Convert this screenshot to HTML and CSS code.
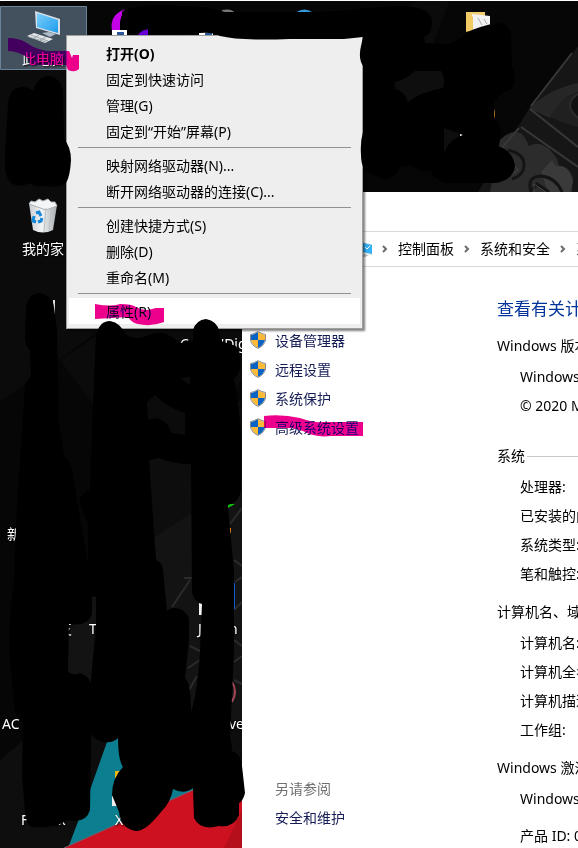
FILE: index.html
```html
<!DOCTYPE html>
<html lang="zh-CN">
<head>
<meta charset="utf-8">
<meta name="viewport" content="width=device-width, initial-scale=1">
<title>此电脑</title>
<link rel="stylesheet" href="styles.css">
</head>
<body>
<div class="desktop">
  <svg class="layer" width="578" height="848" viewBox="0 0 578 848" aria-hidden="true">
    <defs>
      <linearGradient id="screen" x1="0" y1="0" x2="1" y2="1"><stop offset="0" stop-color="#7cd0fb"/><stop offset="1" stop-color="#1d9bec"/></linearGradient>
      <linearGradient id="bin" x1="0" x2="1"><stop offset="0" stop-color="#c9ced3"/><stop offset=".45" stop-color="#f2f4f5"/><stop offset="1" stop-color="#a5abb0"/></linearGradient>
    </defs>
    <!-- wallpaper -->
    <path fill="#0b0b0b" d="M0 70V402L100 330V70zM288 60 420 0H450L400 130zM60 360 110 327H242V380L150 480z"/>
    <path fill="#0d0d0d" d="M150 460 242 400V848H60L75 600z"/>
    <path fill="#131313" d="M150 540 242 480V720H60L70 620z"/>
    <path fill="#0e0e0e" d="M394 70h50v25l-42 12zM444 128h20v10l-20 18zM0 848V760L70 700V848z"/>
    <path fill="#161616" d="M578 46 530 107 478 192H578z"/>
    <path fill="#262626" d="M530 107Q552 88 578 83V92Q562 96 550 118L530 109z"/>
    <path fill="#202020" d="M550 117Q560 98 578 92V127Q560 122 550 117z"/>
    <path fill="#111" stroke="#2b2b2b" stroke-width="2" d="M578 94q-16 10 0 24"/>
    <path fill="#2c2c2c" d="M500 140Q512 128 522 134 527 140 529 146 544 138 557 159 560 169 558 166 568 164 573 178L572 192H490z"/>
    <path fill="#3a3a3a" d="M541 172 552 160Q556 168 558 166 570 166 573 182L570 192H548z"/>
    <g fill="none" stroke="#383838" stroke-width="2">
      <path d="M572 53 531 106M530 109 578 147M521 127 578 167M519 128 500 150"/>
    </g>
    <g fill="none" stroke="#141414" stroke-width="3">
      <path d="M508 150Q525 154 524 166 523 176 512 179M531 192Q526 176 542 176 556 178 562 192M532 190 537 184 549 192"/>
    </g>
    <path fill="none" stroke="#444" stroke-width="1" d="M534 192V184L546 192M513 164l5 6-5 4"/>
    <g fill="none" stroke="#2b2b2b" stroke-width="2">
      <path d="M190 580 172 607M184 578h10M190 646l12 6M188 668l12-8M189 690l8-14M242 508 230 524M234 560l8 6M235 582l7-5M234 610l8-8M234 640l8 6M234 662l8-6M234 680l8 4"/>
    </g>
    <path fill="#0b7f90" d="M68 848 90 790 107 742 125 710 205 740V795z"/>
    <path fill="#ce1120" d="M64 848 193 790 242 768V848z"/>
    <path fill="#b50f1b" d="M242 810 224 848H242z"/>
    <path stroke="#72616c" fill="none" d="M64 848 193 790"/>
    <path stroke="#fff" d="M0 .5H578"/>
    <!-- selected icon -->
    <path fill="#43515f" stroke="#6c8499" d="M.5 6.500H86.500V69.500H.5z"/>
    <path fill="#d9e0e5" d="M35 11 60 19V35L36 28z"/>
    <path fill="url(#screen)" d="M37 13 58 20V33L37 27z"/>
    <path fill="#aebdc8" d="M42 33l7-1 7 2-6 3z"/>
    <path fill="#e4e7e8" d="M27 36 34 33 53 39 45 43z"/>
    <path stroke="#9ba6ad" fill="none" d="M31 35l17 6M29 37l17 5M34 38l5-3M40 40l6-3"/>
    <!-- recycle bin -->
    <path fill="url(#bin)" d="M29 203 57 205 53 230Q43 235 33 230z"/>
    <path fill="#f3f5f6" stroke="#a9b0b5" d="M29 204l2-3 4 1 4-3 4 2 5-2 3 3 4 0 2 4-11 4z"/>
    <path stroke="#bbc1c5" fill="none" d="M46 208 44 232M52 207 49 230"/>
    <path fill="none" stroke="#1686d9" stroke-width="3" d="M36 213l3-1 2 4M34 216l-1 5 3 1M38 222l3-1 1-3"/>
    <!-- other program icons -->
    <path fill="#c300e8" d="M125 9Q109 15 112 31h10V12z"/>
    <path fill="#fff" d="M112 30h15v5h-15zM199 32h14v3h-14z"/>
    <path fill="#2b579a" d="M117 32h7v3h-7zM205 33h7v2h-7z"/>
    <path fill="#6800d8" d="M149 29Q141 30 138 35h10z"/>
    <path fill="#777" d="M222 10q10-2 13 3h-13z"/>
    <path fill="#349bdd" d="M295 13q9-7 19 0z"/>
    <path fill="#0b5277" d="M388 9q3-2 5 0z"/>
    <path fill="#f1cd70" d="M466 12h19v4h-10v14l-9 1z"/>
    <path fill="#f2f2f2" d="M472 14l18 2v10l-17 4z"/>
    <path fill="none" stroke="#aaa" d="M478 18l4 7M484 19l3 5"/>
    <path fill="#f2ca64" d="M466 12 473 17V30L466 32z"/>
    <path fill="#e69020" d="M493 106q3 6 1 13z"/>
    <path fill="#eee" d="M460 133l5 3-5 2z"/>
    <path fill="#ddd" d="M53 300h2v16h-2z"/>
    <path fill="#12c10d" d="M227 504h8l-7 4z"/>
    <path fill="#d87918" d="M229 528h2v5h-2z"/>
    <path fill="#0b5bd1" d="M233 583h2v26h-2z"/>
    <path fill="#f4f4f4" d="M199 603h8v12h-8z"/>
    <path fill="#2b65ad" d="M202 607l4-2v7q-5-1-4-5z"/>
    <path fill="none" stroke="#a04657" stroke-width="2" d="M232 682q6 9 0 20"/>
    <path fill="#efb90f" d="M115 771h8v7h-8z"/>
    <path fill="#eee" d="M112 796h6v10h-6z"/>
  </svg>

  <span class="label label-pc">此电脑</span>
  <span class="label label-bin">我的家</span>
  <span class="label label-dig">C</span>
  <span class="label label-dig-end">'Dig</span>
  <span class="label label-new">新</span>
  <span class="label label-tool">支</span>
  <span class="label label-t">T</span>
  <span class="label label-j">J</span>
  <span class="label label-n">n</span>
  <span class="label label-ac">AC</span>
  <span class="label label-ve">ve</span>
  <span class="label label-firefox">Firefox</span>
  <span class="label label-x">X</span>

  <main class="window">
    <header class="titlebar"></header>
    <nav class="address" aria-label="地址">
      <svg width="22" height="18" viewBox="0 0 22 18" aria-hidden="true"><path fill="#dbe3e8" d="M3 0 22 4V15L3 11z"/><path fill="#35b0f5" d="M4 1 22 5V14L4 10z"/><path fill="none" stroke="#fff" d="M15 7l2 2 3-3"/><path fill="#b5bdc2" d="M8 13l11 2-4 2-10-2z"/></svg>
      <svg class="chevron" width="6" height="8" viewBox="0 0 6 8" aria-hidden="true"><path d="M1 1 4 4 1 7"/></svg>
      <a href="#panel">控制面板</a>
      <svg class="chevron" width="6" height="8" viewBox="0 0 6 8" aria-hidden="true"><path d="M1 1 4 4 1 7"/></svg>
      <a href="#security">系统和安全</a>
      <svg class="chevron" width="6" height="8" viewBox="0 0 6 8" aria-hidden="true"><path d="M1 1 4 4 1 7"/></svg>
      <a href="#system">系</a>
    </nav>
    <div class="content">
      <aside class="sidebar">
        <svg class="defs" width="0" height="0" aria-hidden="true">
          <symbol id="shield" viewBox="0 0 16 18">
            <path fill="#fff" d="M8 0Q12 3 16 3V9Q15 15 8 18 1 15 0 9V3Q4 3 8 0z"/>
            <path fill="#0863c5" d="M8 1V9H1V4Q5 3 8 1zM8 9H15Q14 14 8 17z"/>
            <path fill="#fdb937" d="M8 1Q11 3 15 4V9H8zM1 9H8V17Q2 14 1 9z"/>
            <path fill="none" stroke="#85898c" d="M8 .7Q12 3 15.500 3.500V9Q14.500 14.500 8 17.400 1.500 14.500.5 9V3.500Q4 3 8 .7z"/>
          </symbol>
        </svg>
        <div class="links">
          <a href="#devices"><svg width="16" height="18" aria-hidden="true"><use href="#shield"/></svg>设备管理器</a>
          <a href="#remote"><svg width="16" height="18" aria-hidden="true"><use href="#shield"/></svg>远程设置</a>
          <a href="#protection"><svg width="16" height="18" aria-hidden="true"><use href="#shield"/></svg>系统保护</a>
          <a href="#advanced"><svg width="16" height="18" aria-hidden="true"><use href="#shield"/></svg>高级系统设置</a>
        </div>
        <div class="related">
          <span>另请参阅</span>
          <a href="#maintenance">安全和维护</a>
        </div>
      </aside>
      <div class="details">
        <h1>查看有关计</h1>
        <section class="edition">
          <h2>Windows 版本</h2>
          <p>Windows</p>
          <p>© 2020 M</p>
        </section>
        <section>
          <h2>系统</h2>
          <p>处理器:</p>
          <p>已安装的内</p>
          <p>系统类型:</p>
          <p>笔和触控:</p>
        </section>
        <section>
          <h2>计算机名、域</h2>
          <p>计算机名:</p>
          <p>计算机全名</p>
          <p>计算机描述</p>
          <p>工作组:</p>
        </section>
        <section class="activation">
          <h2>Windows 激活</h2>
          <p>Windows</p>
          <p>产品 ID: 0</p>
        </section>
      </div>
    </div>
  </main>

  <div class="menu" role="menu">
    <button role="menuitem" class="default">打开(O)</button>
    <button role="menuitem">固定到快速访问</button>
    <button role="menuitem">管理(G)</button>
    <button role="menuitem">固定到“开始”屏幕(P)</button>
    <hr>
    <button role="menuitem">映射网络驱动器(N)...</button>
    <button role="menuitem">断开网络驱动器的连接(C)...</button>
    <hr>
    <button role="menuitem">创建快捷方式(S)</button>
    <button role="menuitem">删除(D)</button>
    <button role="menuitem">重命名(M)</button>
    <hr>
    <button role="menuitem" class="active">属性(R)</button>
  </div>

  <!-- black brush strokes -->
  <svg class="layer" width="578" height="848" viewBox="0 0 578 848" aria-hidden="true">
    <g fill-rule="evenodd" stroke-linejoin="round">
      <path d="M120 22Q121 12 130 8Q150 4 180 6Q205 5 225 12L288 12Q330 12 350 10Q380 6 405 6Q432 8 432 22Q432 34 424 37L425 43L450 44Q465 35 472 30Q490 23 501 23Q510 26 511 35L512 66Q515 72 515 80Q513 91 502 93L494 102V118Q501 125 501 135L498 146Q513 151 515 166Q513 180 496 183H460Q446 184 439 180Q431 176 431 171Q418 172 411 165L400 167Q396 178 385 179Q377 178 373 174Q361 172 361 155Q360 142 363 132V66Q358 58 361 46L363 37 344 39H290Q240 41 220 36Q212 32 200 33L165 35 148 34V29Q141 30 138 33L127 33V30H120z
        M394 82Q402 82 415 71H441Q446 78 443 88Q420 92 408 102Q405 91 395 89z
        M444 128 463 135Q450 138 444 153z"/>
      <path d="M8 104Q9 88 22 87Q29 87 33 91Q38 76 49 76Q61 78 63 91L64 139Q71 147 71 160Q70 177 66 183Q60 188 45 186Q36 188 30 183Q15 190 8 179Q4 173 5 155z"/>
      <path d="M26 307Q29 293 40 293Q53 296 54 307L57 330 59 425 64 456Q72 463 73 476L88 565 92 597V614Q88 627 69 624L68 672Q75 676 80 673Q92 677 92 690L90 810Q86 824 68 820L58 825Q38 829 30 826Q26 823 25 812L22 775 23 722Q15 717 14 704L10 660Q8 620 14 580L17 505 25 386Q27 379 31 377L30 350Q25 345 25 338z"/>
      <path d="M96 336Q99 321 110 321Q121 323 125 334Q134 340 144 337Q155 332 164 333 170 335 180 343L193 341V330Q196 320 206 319Q217 321 219 331L221 341 236 346Q241 354 240 368Q239 375 234 378L239 410 241 435V490Q240 502 228 505L230 530 234 570V650L230 737Q232 744 232 751Q241 754 242 766L245 793Q243 801 239 803V815Q234 828 219 826Q200 831 194 818L193 788Q184 795 173 789Q171 802 161 812Q145 832 136 831Q121 829 119 812L112 795Q112 778 123 767Q118 760 118 738Q114 743 104 742Q94 740 91 733V680L96 625V597L92 596 88 567V525L79 500Q83 492 90 490L94 380z
        M155 395Q168 408 185 413V435L171 433Q168 420 155 418L148 420 147 402z
        M180 378Q187 378 190 376V385z
        M149 460 159 458Q173 464 191 464L192 592Q194 602 202 604L200 650Q198 690 191 712Q191 683 185 678L189 640V618Q184 608 175 608 170 608 167 611L163 570Q162 562 156 560z"/>
    </g>
  </svg>
  <!-- pink highlighter strokes -->
  <svg class="layer marker" width="578" height="848" viewBox="0 0 578 848" aria-hidden="true">
    <path d="M8 38Q19 38 27 43 35 49 47 51L69 51 72 58 73 55H79V69Q75 73 68 70L66 65H30Q29 58 25 56 16 51 8 51z"/>
    <path d="M95 304Q111 307 120 304 132 304 136 307 141 310 148 310L156 308H164V322Q151 327 138 324 132 323 128 317L95 319z"/>
    <path d="M264 416Q282 414 300 418 313 423 323 422H363V436H331Q315 438 303 431L292 428H264z"/>
  </svg>
</div>
</body>
</html>
```

FILE: styles.css
```css
* {
  box-sizing: border-box;
}

body {
  margin: 0;
  font: 14px/20px "Noto Sans", "Noto Sans CJK SC", sans-serif;
  color: #000;
}

a {
  color: inherit;
  text-decoration: none;
}

h1,
h2,
p {
  margin: 0;
  font-weight: 400;
}

.desktop {
  position: relative;
  min-height: 100vh;
  padding: 192px 0 0 242px;
  overflow: hidden;
  background: #060606;
  white-space: nowrap;
  isolation: isolate;
}

.layer {
  position: absolute;
  top: 0;
  left: 0;
  pointer-events: none;
}

.marker {
  fill: #ec008c;
  mix-blend-mode: darken;
}

/* Desktop icon captions */
.label {
  position: absolute;
  color: #fff;
  text-shadow: 1px 1px 2px #000;
}

.label-pc { left: 22px; top: 49px; }
.label-bin { left: 22px; top: 239px; }
.label-dig { left: 180px; top: 334px; }
.label-dig-end { left: 221px; top: 334px; }
.label-new { left: 7px; top: 524px; }
.label-tool { left: 58px; top: 619px; }
.label-t { left: 89px; top: 619px; }
.label-j { left: 198px; top: 619px; }
.label-n { left: 229px; top: 619px; }
.label-ac { left: 2px; top: 714px; }
.label-ve { left: 229px; top: 714px; }
.label-firefox { left: 21px; top: 810px; }
.label-x { left: 115px; top: 810px; }

/* System window */
.window {
  position: relative;
  display: flex;
  flex-direction: column;
  min-height: calc(100vh - 192px);
  overflow: hidden;
  background: #fff;
}

.titlebar {
  height: 39px;
}

.address {
  display: flex;
  align-items: center;
  gap: 10px;
  height: 36px;
  padding-left: 108px;
  border: solid #d9d9d9;
  border-width: 1px 0;
}

.address > * {
  flex: none;
}

.chevron {
  fill: none;
  stroke: #6b6b6b;
  stroke-width: 2;
}

.content {
  display: flex;
  flex: 1;
}

.sidebar {
  display: flex;
  flex: none;
  flex-direction: column;
  justify-content: space-between;
  width: 255px;
  padding: 64px 0 20px 8px;
  color: #151c55;
}

.defs {
  position: absolute;
}

.links,
.related {
  display: flex;
  flex-direction: column;
  gap: 9px;
}

.links a {
  display: flex;
  gap: 9px;
}

.related {
  padding-left: 25px;
}

.related span {
  color: #707070;
}

.details {
  flex: 1;
  min-width: 0;
  padding-top: 30px;
}

.details h1 {
  margin-bottom: 15px;
  color: #003399;
  font-size: 17px;
  line-height: 24px;
}

.details section {
  display: flex;
  flex-direction: column;
  gap: 9px;
  margin-bottom: 18px;
}

.details h2 {
  display: flex;
  align-items: center;
  gap: 2px;
  margin-bottom: 2px;
  font-size: 14px;
}

.details h2::after {
  content: "";
  flex: 1;
  height: 1px;
  background: #c8c8c8;
}

.details p {
  padding-left: 23px;
}

.details .edition {
  margin-bottom: 30px;
}

.details .activation {
  gap: 17px;
  margin-bottom: 0;
}

.activation h2 {
  margin-bottom: -6px;
}

/* Context menu */
.menu {
  position: absolute;
  top: 35px;
  left: 66px;
  width: 297px;
  padding: 4px 2px;
  border: 1px solid #a0a0a0;
  background: #eee;
  box-shadow: 2px 2px 2px rgba(0, 0, 0, 0.5);
}

.menu button {
  display: block;
  width: 100%;
  height: 26px;
  padding: 2px 0 0 37px;
  border: 0;
  background: none;
  color: #000;
  font: inherit;
  text-align: left;
}

.menu .default {
  font-weight: 700;
}

.menu .active {
  background: #fff;
}

.menu hr {
  height: 1px;
  margin: 3px 9px 4px;
  border: 0;
  background: #919191;
}
```
